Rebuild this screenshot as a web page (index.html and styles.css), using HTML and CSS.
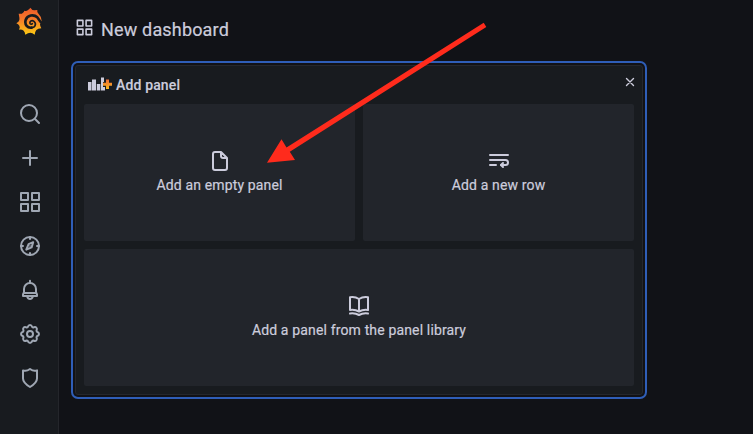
FILE: index.html
```html
<!DOCTYPE html>
<html lang="en">
<head>
<meta charset="utf-8">
<title>New dashboard</title>
<link rel="stylesheet" href="styles.css">
</head>
<body>
<div class="app">
  <nav class="sidebar">
    <svg class="logo" viewBox="48 22 78 84">
      <defs><linearGradient id="flame" x1="0" y1="0" x2="0" y2="1"><stop offset="0" stop-color="#f05a28"/><stop offset=".4" stop-color="#f4772b"/><stop offset="1" stop-color="#fccb13"/></linearGradient></defs>
      <path fill="url(#flame)" d="M91 24Q96 32 103 32L112 31Q110 38 116 43Q124 50 125 64Q122 69 120 74Q120 80 124 86Q114 87 109 91Q105 96 104 105Q97 99 91 99Q84 99 76 105Q75 97 71 93Q66 89 57 90Q61 82 58 78Q55 74 49 71Q57 66 58 61Q59 55 56 42Q65 44 69 39Q72 37 73 33Q80 35 84 31Q87 29 91 24Z"/>
      <path class="swirl" d="M127 70C119 68 118 59 112 53C101 43 82 46 77 61C73 75 83 86 95 84"/>
      <path class="swirl curl" d="M93 84C106 85 110 72 102 65C95 60 88 65 90 71C92 75 96 74 97 72"/>
    </svg>
    <div class="menu">
      <svg class="icon" viewBox="0 0 24 24"><circle cx="11" cy="11" r="8"/><path d="M17.3 17.3L21 21"/></svg>
      <svg class="icon" viewBox="0 0 24 24"><path d="M12 5v14M5 12h14"/></svg>
      <svg class="icon" viewBox="0 0 24 24"><path d="M3 3h7v7H3zM14 3h7v7h-7zM3 14h7v7H3zM14 14h7v7h-7z"/></svg>
      <svg class="icon" viewBox="0 0 24 24"><circle cx="12" cy="12" r="9"/><path d="M12 3v2M12 19v2M3 12h2M19 12h2M15.2 8.2L10.6 10.2 8.3 15.7 13.6 13.4Z"/><circle class="dot" cx="12" cy="12" r=".8"/></svg>
      <svg class="icon" viewBox="0 0 24 24"><path d="M12 2.8V5M6 15V11a6 6 0 0 1 12 0v4M5 18v-1.6Q5 15 6.400 15H17.600Q19 15 19 16.400V18ZM9.200 18.700Q10 21 12 21T14.800 18.700"/></svg>
      <svg class="icon" viewBox="0 0 24 24"><circle cx="12" cy="12" r="3"/><path d="M9.700 5.100Q10.500 3 12 3T14.300 5.100L15.250 5.500Q17.300 4.600 18.360 5.640T18.500 8.750L18.900 9.700Q21 10.500 21 12T18.900 14.300L18.500 15.250Q19.400 17.300 18.360 18.360T15.250 18.500L14.300 18.900Q13.500 21 12 21T9.700 18.900L8.750 18.500Q6.700 19.400 5.640 18.360T5.500 15.250L5.100 14.300Q3 13.500 3 12T5.100 9.700L5.500 8.750Q4.600 6.700 5.640 5.640T8.750 5.500Z"/></svg>
      <svg class="icon" viewBox="0 0 24 24"><path d="M12 3Q15.500 5.500 19 4.400V12.500C19 16.500 15.500 18.800 12 21C8.500 18.800 5 16.500 5 12.500V4.400Q8.500 5.500 12 3Z"/></svg>
    </div>
  </nav>
  <main class="content">
    <header class="page-header">
      <svg class="icon header-icon" viewBox="0 0 24 24"><path d="M3 3h7v7H3zM14 3h7v7h-7zM3 14h7v7H3zM14 14h7v7h-7z"/></svg>
      <h1 class="page-title">New dashboard</h1>
    </header>
    <section class="panel">
      <div class="panel-header">
        <svg class="panel-icon" viewBox="0 0 24 14">
          <defs><linearGradient id="plus" x1="0" y1="0" x2="0" y2="1"><stop offset="0" stop-color="#ee6a35"/><stop offset="1" stop-color="#f9b91f"/></linearGradient></defs>
          <path class="bars" d="M0 5h3.500v8.500H0zM4 2.500H8v11H4zM8.800 7h3.500v6.500H8.800zM13 .5H16v4.500h-1v5h2v3.500h-4z"/>
          <path fill="url(#plus)" d="M18 2.500h3v3.200h3v3h-3V12h-3V8.700h-3v-3h3z"/>
        </svg>
        <h2 class="panel-title">Add panel</h2>
        <svg class="icon close" viewBox="0 0 16 16"><path d="M4.500 4.500l7 7M11.500 4.500l-7 7"/></svg>
      </div>
      <div class="cards">
        <div class="card">
          <svg class="icon" viewBox="0 0 24 24"><path d="M13 3H7a2 2 0 0 0-2 2v14a2 2 0 0 0 2 2h10a2 2 0 0 0 2-2V9ZM13 3v4a2 2 0 0 0 2 2h4"/></svg>
          <span class="label">Add an empty panel</span>
        </div>
        <div class="card">
          <svg class="icon" viewBox="0 0 24 24"><path d="M3 6h18M3 11h15.500a2.500 2.500 0 0 1 0 5H14M3 16h6"/><path d="M16 14L14 16l2 2"/></svg>
          <span class="label">Add a new row</span>
        </div>
        <div class="card wide">
          <svg class="icon" viewBox="0 0 24 24"><path d="M12 5Q8 2.500 3 3.300V16Q8 15.300 12 17.500Q16 15.300 21 16V3.300Q16 2.500 12 5V17M3 19.500Q8 18.800 12 21Q16 18.800 21 19.500"/></svg>
          <span class="label">Add a panel from the panel library</span>
        </div>
      </div>
    </section>
  </main>
  <svg class="arrow" viewBox="0 0 753 434"><path d="M483.700 22.700L286.500 147.500 281.500 139.300 267 162.700 295 160 289.800 151.700 486.300 27Z"/></svg>
</div>
</body>
</html>
```
FILE: styles.css
```css
* { box-sizing: border-box; }
body { margin: 0; background: #111217; color: #ccccdc; font-family: Roboto, "Liberation Sans", sans-serif; }
.app { position: relative; display: flex; height: 434px; overflow: hidden; }
.sidebar { width: 59px; flex: none; background: #181b1f; border-right: 1px solid #24262b; padding: 7px 0 0 1px; display: flex; flex-direction: column; align-items: center; color: #9fa7b3; }
.logo { width: 26px; height: 28px; margin-right: 2px; }
.swirl { fill: none; stroke: #181b1f; stroke-width: 8; stroke-linecap: round; }
.curl { stroke-width: 5; }
.menu { margin-top: 67px; display: flex; flex-direction: column; gap: 20px; }
.icon { display: block; flex: none; width: 24px; height: 24px; fill: none; stroke: currentColor; stroke-width: 2; stroke-linecap: round; stroke-linejoin: round; }
.dot { fill: currentColor; stroke: none; }
.content { flex: 1; padding: 0 0 0 16px; }
.page-header { height: 65px; display: flex; align-items: flex-start; padding-top: 18px; }
.header-icon { width: 19px; height: 19px; margin: 0 7.5px 0 -.5px; }
.page-title { margin: 0; font-size: 18px; line-height: 24px; font-weight: 400; letter-spacing: .17px; -webkit-text-stroke: .2px; }
.panel { width: 568px; height: 330px; background: #181b1f; border: 1px solid #25272c; border-radius: 3px; box-shadow: 0 0 0 2px #111217, 0 0 0 4px #2f5eb8; padding: 0 8px 8px; }
.panel-header { height: 38px; display: flex; align-items: center; padding: 0 4px; }
.panel-icon { width: 24px; height: 14px; margin-top: -3px; }
.bars { fill: #ccccdc; }
.panel-title { margin: 0 0 0 4px; font-size: 14px; line-height: 20px; font-weight: 500; letter-spacing: .15px; -webkit-text-stroke: .15px; }
.close { width: 16px; height: 16px; margin: -6px -8px 0 auto; stroke-width: 1.4; }
.cards { display: grid; grid-template: 137px 137px / 1fr 1fr; gap: 8px; }
.card { background: #22252b; border-radius: 2px; display: flex; flex-direction: column; align-items: center; justify-content: center; }
.card .icon { margin: -1px 0 1px; }
.wide { grid-column: 1 / 3; }
.label { font-size: 14px; line-height: 22px; letter-spacing: .15px; -webkit-text-stroke: .2px; }
.arrow { position: absolute; inset: 0; width: 753px; height: 434px; fill: #ff2b1c; pointer-events: none; }
```
